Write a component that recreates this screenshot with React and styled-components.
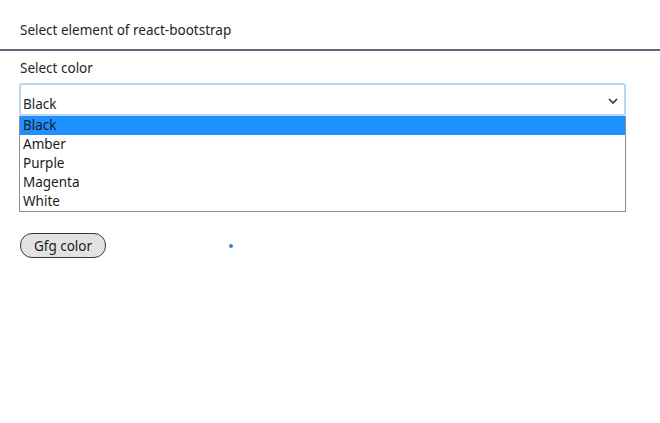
import styled, { createGlobalStyle } from "styled-components";

const GlobalStyle = createGlobalStyle`
body {
  margin: 0;
  background: #fff;
  font-family: "Noto Sans", "Open Sans", sans-serif;
  color: #212529;
}
`;

const Page = styled.div`
width: 660px;
height: 423px;
overflow: hidden;
`;

const Header = styled.div`
padding: 21px 20px 10px;
font-size: 13.5px;
border-bottom: 2px solid #5f6b7a;
`;

const Body = styled.div`
padding: 8px 19px 0 19px;
`;

const Label = styled.div`
font-size: 13.5px;
padding-left: 1px;
margin-bottom: 6px;
`;

const SelectWrap = styled.div`
position: relative;
width: 607px;
`;

const SelectBox = styled.div`
height: 33px;
box-sizing: border-box;
border: 2px solid #bcd6f2;
border-radius: 3px;
display: flex;
align-items: flex-end;
justify-content: space-between;
padding: 0 6px 1px 2px;
font-size: 13.5px;
`;

const Chevron = styled.svg`
margin-bottom: 9px;
`;

const List = styled.ul`
position: absolute;
top: 33px;
left: 0;
right: 0;
margin: 0;
padding: 0;
list-style: none;
background: #fff;
border: 1px solid #8a8f96;
border-top: none;
z-index: 2;
`;

const Option = styled.li`
height: 19px;
line-height: 19px;
padding-left: 3px;
font-size: 13.5px;
color: #1b1b1b;
background: ${(p) => (p.active ? "#1e90ff" : "transparent")};
`;

const Row = styled.div`
display: flex;
align-items: center;
margin-top: 117px;
padding-left: 1px;
`;

const Button = styled.button`
font-family: inherit;
font-size: 13.5px;
color: #1b1b1b;
height: 25px;
width: 86px;
padding: 0;
border: 1px solid #2f3a4a;
border-radius: 12px;
background: #e2e2e2;
`;

const Dot = styled.span`
width: 4px;
height: 4px;
border-radius: 50%;
background: #3f7fc4;
margin-left: 123px;
`;

const colors = ["Black", "Amber", "Purple", "Magenta", "White"];

const App = () => {
  return (
    <Page>
      <GlobalStyle />
      <Header>Select element of react-bootstrap</Header>
      <Body>
        <Label>Select color</Label>
        <SelectWrap>
          <SelectBox>
            <span>Black</span>
            <Chevron width="10" height="6" viewBox="0 0 10 6">
              <path d="M1 1l4 4 4-4" fill="none" stroke="#2a3340" strokeWidth="1.6" />
            </Chevron>
          </SelectBox>
          <List>
            {colors.map((c, i) => (
              <Option key={c} active={i === 0}>{c}</Option>
            ))}
          </List>
        </SelectWrap>
        <Row>
          <Button>Gfg color</Button>
          <Dot />
        </Row>
      </Body>
    </Page>
  );
};

export default App;
